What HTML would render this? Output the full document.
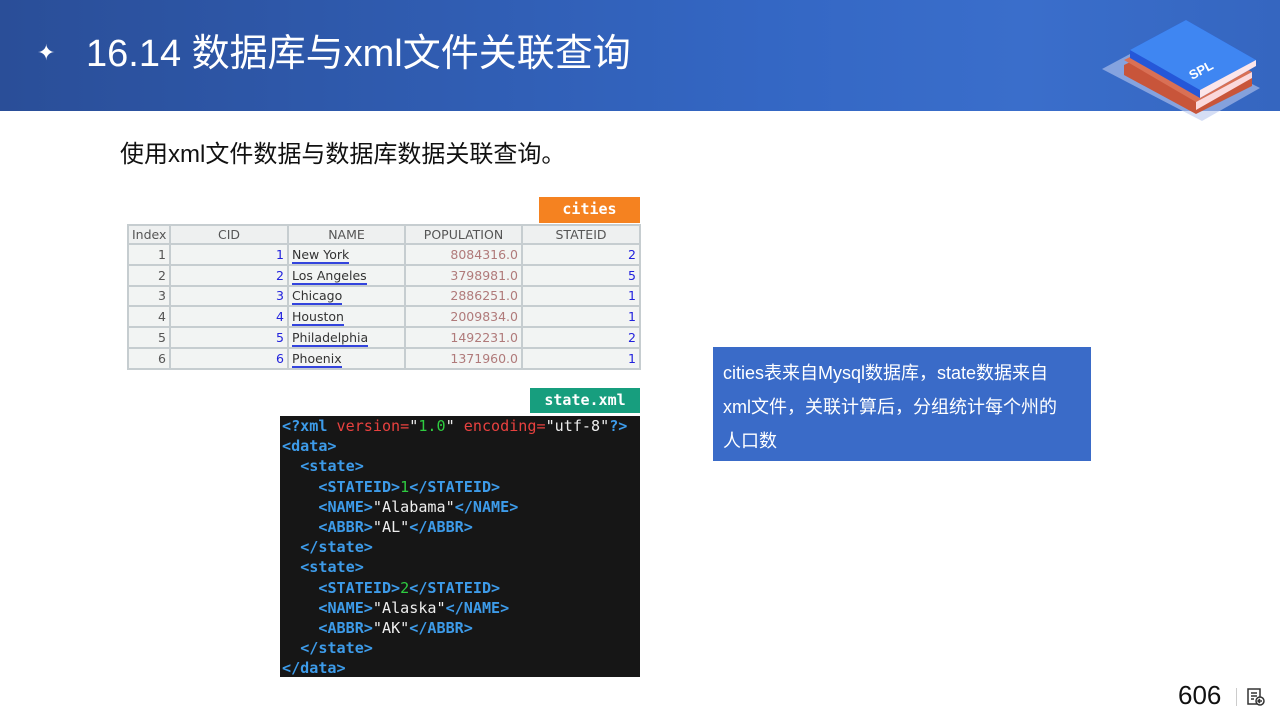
<!DOCTYPE html><html><head><meta charset="utf-8"><style>
body{margin:0;width:1280px;height:720px;position:relative;overflow:hidden;background:#fff;font-family:"Liberation Sans","Noto Sans CJK SC",sans-serif}
.hdr{position:absolute;left:0;top:0;width:1280px;height:111px;background:linear-gradient(90deg,#2a4e98 0%,#3467c4 60%,#3a6ecb 80%,#3566c0 100%)}
.title{position:absolute;left:86px;top:30px;color:#fff;font-size:38px;line-height:48px}
.star{position:absolute;left:37px;top:40px;color:#fff;font-size:22px}
.sub{position:absolute;left:120px;top:134px;font-size:24px;color:#111}
table{position:absolute;left:127px;top:224px;border-collapse:collapse;table-layout:fixed;width:512px;font-size:12.5px;font-family:"DejaVu Sans",sans-serif;background:#f2f4f3}
td,th{border:2px solid #c6cdd0;height:17px;padding:0 3px;font-weight:normal;color:#555;white-space:nowrap;overflow:hidden}
tr.d td{height:18.8px}
th{text-align:center;background:#eef0f0}
td{text-align:right}
td.b{color:#2222dd}td.p{color:#b07a7a}
td.n{text-align:left;color:#333}td.n span{border-bottom:2px solid #3344dd}
.lbl{position:absolute;color:#fff;font-family:"DejaVu Sans Mono",monospace;font-weight:bold;font-size:15px;text-align:center}
.code{position:absolute;left:280px;top:416px;width:360px;height:261px;background:#161616;font-family:"DejaVu Sans Mono",monospace;font-size:15.1px;line-height:20.2px;color:#eee;padding-left:2px;box-sizing:border-box;white-space:pre;overflow:hidden}
.t{color:#3d9be9;font-weight:bold}.r{color:#e8413f}.g{color:#2ecc40}
.box{position:absolute;left:713px;top:347px;width:378px;height:114px;background:#3a6bc8;color:#fff;font-size:18px;line-height:34px;padding:9px 10px;box-sizing:border-box;white-space:nowrap}
.pg{position:absolute;left:1178px;top:680px;font-size:26px;color:#111}
</style></head><body>
<div class="hdr"></div>
<div class="star">✦</div>
<div class="title">16.14 数据库与xml文件关联查询</div>
<svg style="position:absolute;left:1100px;top:18px" width="160" height="105" viewBox="0 0 160 105">
<polygon points="2,51 60,20 160,70 102,103" fill="#b9c8ee" opacity=".6"/>
<polygon points="24,47 80,20 152,60 152,68 96,96 24,57" fill="#c8553a"/>
<polygon points="24,42 80,14 152,54 96,84" fill="#d97055"/>
<polygon points="96,84 152,54 152,60 96,92" fill="#fbd9dc"/>
<polygon points="30,32 86,2 156,42 156,48 100,80 30,40" fill="#2557d8"/>
<polygon points="30,32 86,2 156,42 100,72" fill="#3f86f2"/>
<polygon points="100,72 156,42 156,48 100,80" fill="#fce6ea"/>
<text x="92" y="62" fill="#fff" font-size="13" font-weight="bold" font-family="Liberation Sans" transform="rotate(-28 92 62)">SPL</text>
</svg>
<div class="sub">使用xml文件数据与数据库数据关联查询。</div>
<div class="lbl" style="left:539px;top:197px;width:101px;height:26px;line-height:25px;background:#f58220">cities</div>
<table>
<colgroup><col style="width:42px"><col style="width:118px"><col style="width:117px"><col style="width:117px"><col style="width:118px"></colgroup>
<tr><th>Index</th><th>CID</th><th>NAME</th><th>POPULATION</th><th>STATEID</th></tr>
<tr class="d"><td>1</td><td class="b">1</td><td class="n"><span>New York</span></td><td class="p">8084316.0</td><td class="b">2</td></tr>
<tr class="d"><td>2</td><td class="b">2</td><td class="n"><span>Los Angeles</span></td><td class="p">3798981.0</td><td class="b">5</td></tr>
<tr class="d"><td>3</td><td class="b">3</td><td class="n"><span>Chicago</span></td><td class="p">2886251.0</td><td class="b">1</td></tr>
<tr class="d"><td>4</td><td class="b">4</td><td class="n"><span>Houston</span></td><td class="p">2009834.0</td><td class="b">1</td></tr>
<tr class="d"><td>5</td><td class="b">5</td><td class="n"><span>Philadelphia</span></td><td class="p">1492231.0</td><td class="b">2</td></tr>
<tr class="d"><td>6</td><td class="b">6</td><td class="n"><span>Phoenix</span></td><td class="p">1371960.0</td><td class="b">1</td></tr>
</table>
<div class="lbl" style="left:530px;top:388px;width:110px;height:25px;line-height:25px;background:#179e7e">state.xml</div>
<div class="code"><span class="t">&lt;?xml</span> <span class="r">version=</span>"<span class="g">1.0</span>" <span class="r">encoding=</span>"utf-8"<span class="t">?&gt;</span>
<span class="t">&lt;data&gt;</span>
  <span class="t">&lt;state&gt;</span>
    <span class="t">&lt;STATEID&gt;</span><span class="g">1</span><span class="t">&lt;/STATEID&gt;</span>
    <span class="t">&lt;NAME&gt;</span>"Alabama"<span class="t">&lt;/NAME&gt;</span>
    <span class="t">&lt;ABBR&gt;</span>"AL"<span class="t">&lt;/ABBR&gt;</span>
  <span class="t">&lt;/state&gt;</span>
  <span class="t">&lt;state&gt;</span>
    <span class="t">&lt;STATEID&gt;</span><span class="g">2</span><span class="t">&lt;/STATEID&gt;</span>
    <span class="t">&lt;NAME&gt;</span>"Alaska"<span class="t">&lt;/NAME&gt;</span>
    <span class="t">&lt;ABBR&gt;</span>"AK"<span class="t">&lt;/ABBR&gt;</span>
  <span class="t">&lt;/state&gt;</span>
<span class="t">&lt;/data&gt;</span></div>
<div class="box">cities表来自Mysql数据库，state数据来自<br>xml文件，关联计算后，分组统计每个州的<br>人口数</div>
<div class="pg">606</div>
<div style="position:absolute;left:1236px;top:688px;width:1px;height:18px;background:#ccc"></div>
<svg style="position:absolute;left:1246px;top:687px" width="20" height="20" viewBox="0 0 20 20" fill="none" stroke="#333" stroke-width="1.5"><rect x="2" y="2" width="12" height="15"/><path d="M5 6h6M5 9h6M5 12h3"/><circle cx="14" cy="14" r="4" fill="#fff"/><path d="M12 14h4M14 12l-2 2 2 2"/></svg>
</body></html>
